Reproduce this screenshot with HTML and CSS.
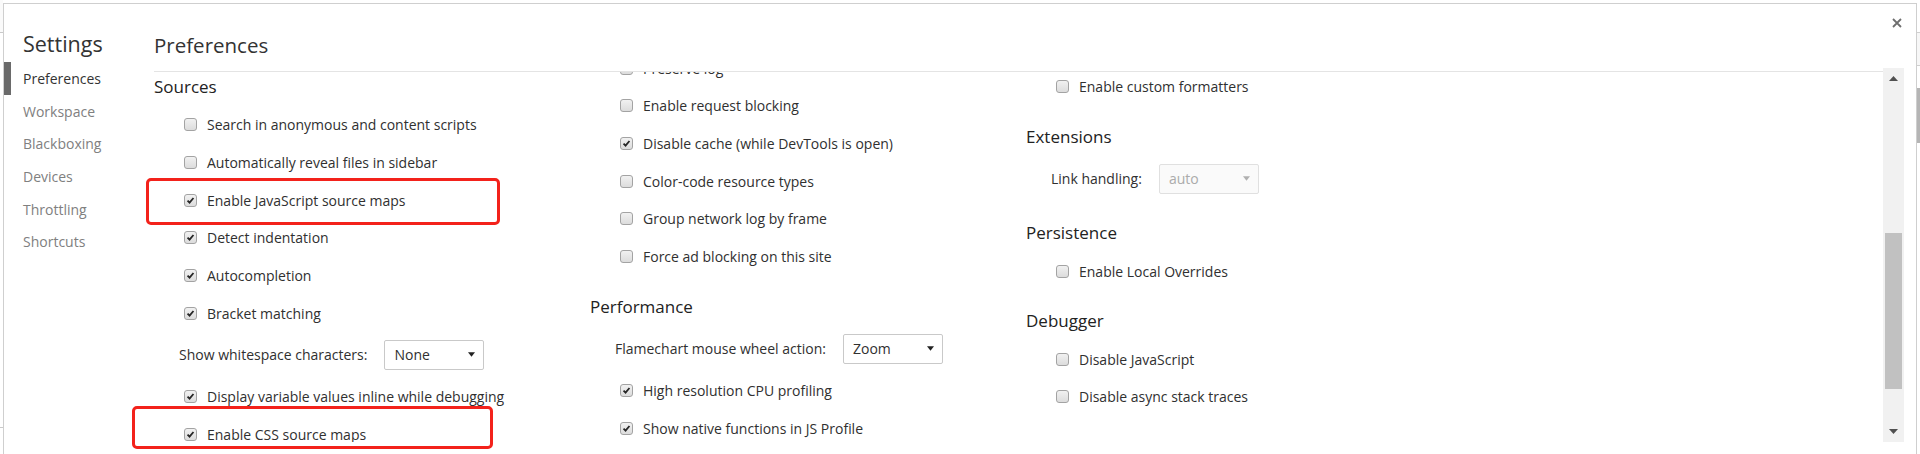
FILE: index.html
```html
<!DOCTYPE html>
<html>
<head>
<meta charset="utf-8">
<title>Settings</title>
<link rel="stylesheet" href="styles.css">
</head>
<body>
<div class="page">
  <div class="strip strip-left"></div>
  <div class="dialog">
    <nav class="sidebar">
      <div class="sidebar-title">Settings</div>
      <div class="nav-item selected">Preferences</div>
      <div class="nav-item">Workspace</div>
      <div class="nav-item">Blackboxing</div>
      <div class="nav-item">Devices</div>
      <div class="nav-item">Throttling</div>
      <div class="nav-item">Shortcuts</div>
    </nav>
    <main class="main">
      <header class="main-header">
        <h1 class="main-title">Preferences</h1>
        <button class="close" aria-label="Close">
          <svg width="10" height="10" viewBox="0 0 10 10"><path d="M1 1L9 9M9 1L1 9" stroke="#6e6e6e" stroke-width="1.8" fill="none"/></svg>
        </button>
      </header>
      <div class="body">
        <div class="viewport">
          <div class="columns">
            <section class="col col-1">
              <h2 class="section-title">Sources</h2>
              <label class="row"><span class="cb"></span><span class="lbl">Search in anonymous and content scripts</span></label>
              <label class="row"><span class="cb"></span><span class="lbl">Automatically reveal files in sidebar</span></label>
              <label class="row"><span class="cb checked"><svg viewBox="0 0 13 13"><path d="M3 6.6L5.4 9L10 3.6"/></svg></span><span class="lbl">Enable JavaScript source maps</span></label>
              <label class="row"><span class="cb checked"><svg viewBox="0 0 13 13"><path d="M3 6.6L5.4 9L10 3.6"/></svg></span><span class="lbl">Detect indentation</span></label>
              <label class="row"><span class="cb checked"><svg viewBox="0 0 13 13"><path d="M3 6.6L5.4 9L10 3.6"/></svg></span><span class="lbl">Autocompletion</span></label>
              <label class="row"><span class="cb checked"><svg viewBox="0 0 13 13"><path d="M3 6.6L5.4 9L10 3.6"/></svg></span><span class="lbl">Bracket matching</span></label>
              <div class="select-row"><span class="sel-lbl">Show whitespace characters:</span><span class="select">None<svg class="caret" viewBox="0 0 8 5"><path d="M0 0H8L4 5Z"/></svg></span></div>
              <label class="row"><span class="cb checked"><svg viewBox="0 0 13 13"><path d="M3 6.6L5.4 9L10 3.6"/></svg></span><span class="lbl">Display variable values inline while debugging</span></label>
              <label class="row"><span class="cb checked"><svg viewBox="0 0 13 13"><path d="M3 6.6L5.4 9L10 3.6"/></svg></span><span class="lbl">Enable CSS source maps</span></label>
            </section>
            <section class="col col-2">
              <label class="row"><span class="cb"></span><span class="lbl">Preserve log</span></label>
              <label class="row"><span class="cb"></span><span class="lbl">Enable request blocking</span></label>
              <label class="row"><span class="cb checked"><svg viewBox="0 0 13 13"><path d="M3 6.6L5.4 9L10 3.6"/></svg></span><span class="lbl">Disable cache (while DevTools is open)</span></label>
              <label class="row"><span class="cb"></span><span class="lbl">Color-code resource types</span></label>
              <label class="row"><span class="cb"></span><span class="lbl">Group network log by frame</span></label>
              <label class="row"><span class="cb"></span><span class="lbl">Force ad blocking on this site</span></label>
              <h2 class="section-title">Performance</h2>
              <div class="select-row"><span class="sel-lbl">Flamechart mouse wheel action:</span><span class="select">Zoom<svg class="caret" viewBox="0 0 8 5"><path d="M0 0H8L4 5Z"/></svg></span></div>
              <label class="row"><span class="cb checked"><svg viewBox="0 0 13 13"><path d="M3 6.6L5.4 9L10 3.6"/></svg></span><span class="lbl">High resolution CPU profiling</span></label>
              <label class="row"><span class="cb checked"><svg viewBox="0 0 13 13"><path d="M3 6.6L5.4 9L10 3.6"/></svg></span><span class="lbl">Show native functions in JS Profile</span></label>
            </section>
            <section class="col col-3">
              <label class="row"><span class="cb"></span><span class="lbl">Enable custom formatters</span></label>
              <h2 class="section-title">Extensions</h2>
              <div class="select-row"><span class="sel-lbl">Link handling:</span><span class="select disabled">auto<svg class="caret" viewBox="0 0 8 5"><path d="M0 0H8L4 5Z"/></svg></span></div>
              <h2 class="section-title">Persistence</h2>
              <label class="row"><span class="cb"></span><span class="lbl">Enable Local Overrides</span></label>
              <h2 class="section-title">Debugger</h2>
              <label class="row"><span class="cb"></span><span class="lbl">Disable JavaScript</span></label>
              <label class="row"><span class="cb"></span><span class="lbl">Disable async stack traces</span></label>
            </section>
          </div>
        </div>
        <div class="scrollbar">
          <div class="sb-btn"><svg width="9" height="5" viewBox="0 0 9 5"><path d="M0 5H9L4.5 0Z"/></svg></div>
          <div class="sb-track"><div class="sb-thumb"></div></div>
          <div class="sb-btn"><svg width="9" height="5" viewBox="0 0 9 5"><path d="M0 0H9L4.5 5Z"/></svg></div>
        </div>
      </div>
    </main>
  </div>
  <div class="strip strip-right"></div>
  <div class="mark mark-1"></div>
  <div class="mark mark-2"></div>
</div>
</body>
</html>
```
FILE: styles.css
```css
* { box-sizing: border-box; }
html, body { margin: 0; padding: 0; }
body {
  width: 1920px;
  height: 454px;
  overflow: hidden;
  background: #ffffff;
  font-family: "Open Sans", "Noto Sans", sans-serif;
  color: #303030;
}
.page {
  position: relative;
  display: flex;
  align-items: flex-start;
  width: 1920px;
  height: 454px;
}
.strip { width: 3px; height: 454px; flex: none; }
.strip-left {
  background: linear-gradient(to bottom,
    #fafafa 0, #fafafa 32px, #c9c9c9 32px, #c9c9c9 33px, #ffffff 33px,
    #ffffff 427px, #c9c9c9 427px, #c9c9c9 428px, #ffffff 428px);
}
.strip-right {
  background: linear-gradient(to bottom,
    #ffffff 0, #ffffff 32px, #d0d0d0 32px, #d0d0d0 33px, #f7f7f7 33px,
    #f7f7f7 65px, #d0d0d0 65px, #d0d0d0 66px, #ffffff 66px,
    #ffffff 88px, #b5b5b5 88px, #b5b5b5 143px, #ffffff 143px);
}
.dialog {
  flex: none;
  width: 1914px;
  height: 470px;
  margin-top: 3px;
  background: #fff;
  border: 1px solid #cfcfcf;
  display: flex;
}

/* sidebar */
.sidebar {
  width: 150px;
  flex: none;
  display: flex;
  flex-direction: column;
}
.sidebar-title {
  height: 58px;
  padding: 22px 0 0 19px;
  font-size: 21.5px;
  line-height: 36px;
  color: #333;
}
.nav-item {
  height: 32.7px;
  display: flex;
  align-items: center;
  border-left: 7px solid transparent;
  padding-left: 12px;
  font-size: 14px;
  color: #808080;
}
.nav-item.selected {
  border-left-color: #6a6a6a;
  color: #333;
}

/* main */
.main {
  flex: 1;
  display: flex;
  flex-direction: column;
  padding-right: 12px;
  min-width: 0;
}
.main-header {
  height: 64px;
  display: flex;
  align-items: flex-start;
}
.main-title {
  flex: 1;
  margin: 0;
  padding-top: 26px;
  font-size: 20.5px;
  line-height: 30px;
  font-weight: 400;
  color: #333;
}
.close {
  width: 21px;
  height: 21px;
  margin: 8px -3px 0 0;
  padding: 0;
  border: 0;
  background: transparent;
  display: flex;
  align-items: center;
  justify-content: center;
}
.body {
  height: 374px;
  display: flex;
}
.viewport {
  flex: 1;
  margin-top: 3px;
  border-top: 1px solid #e4e4e4;
  overflow: hidden;
}
.columns {
  display: grid;
  grid-template-columns: repeat(3, 436px);
  align-items: start;
  margin-top: -24px;
}
.col { display: flex; flex-direction: column; }
.col-1 { padding-top: 7.5px; }
.col-2 { padding-top: 1.4px; }
.col-3 { padding-top: 20px; }

.section-title {
  margin: 0;
  height: 50.3px;
  padding-top: 21.5px;
  font-size: 17px;
  line-height: 20px;
  font-weight: 400;
  color: #222;
}
.row {
  height: 37.7px;
  display: flex;
  align-items: center;
  padding-left: 30px;
  gap: 10px;
  font-size: 14px;
  line-height: 17px;
  color: #303030;
}
.cb {
  width: 13px;
  height: 13px;
  flex: none;
  border: 1px solid #a3a3a3;
  border-radius: 3px;
  background: linear-gradient(#f1f1f1, #dcdcdc);
  display: flex;
}
.cb svg { width: 11px; height: 11px; }
.cb svg path { fill: none; stroke: #262626; stroke-width: 2.1; }
.lbl { white-space: nowrap; }

.select-row {
  height: 46px;
  display: flex;
  align-items: center;
  padding-left: 25px;
  gap: 17px;
  font-size: 14px;
}
.sel-lbl { white-space: nowrap; color: #303030; }
.select {
  width: 100px;
  height: 30px;
  flex: none;
  display: flex;
  align-items: center;
  justify-content: space-between;
  padding: 0 8px 0 9px;
  border: 1px solid #c9c9c9;
  border-radius: 2px;
  background: #fff;
  color: #303030;
}
.caret { width: 7px; height: 5px; }
.caret path { fill: #222; }
.select.disabled {
  border-color: #e0e0e0;
  background: #fafafa;
  color: #ababab;
}
.select.disabled .caret path { fill: #b0b0b0; }

/* scrollbar */
.scrollbar {
  width: 21px;
  flex: none;
  background: #f1f1f1;
  display: flex;
  flex-direction: column;
}
.sb-btn {
  height: 21px;
  display: flex;
  align-items: center;
  justify-content: center;
}
.sb-btn svg path { fill: #505050; }
.sb-track { flex: 1; padding: 144px 2px 0 2px; }
.sb-thumb { height: 156px; background: #c1c1c1; }

/* annotation marks */
.mark {
  position: absolute;
  border: 3px solid #f3221b;
  border-radius: 5px;
}
.mark-1 { left: 146px; top: 178px; width: 354px; height: 47px; }
.mark-2 { left: 132px; top: 406px; width: 361px; height: 43px; }
```
